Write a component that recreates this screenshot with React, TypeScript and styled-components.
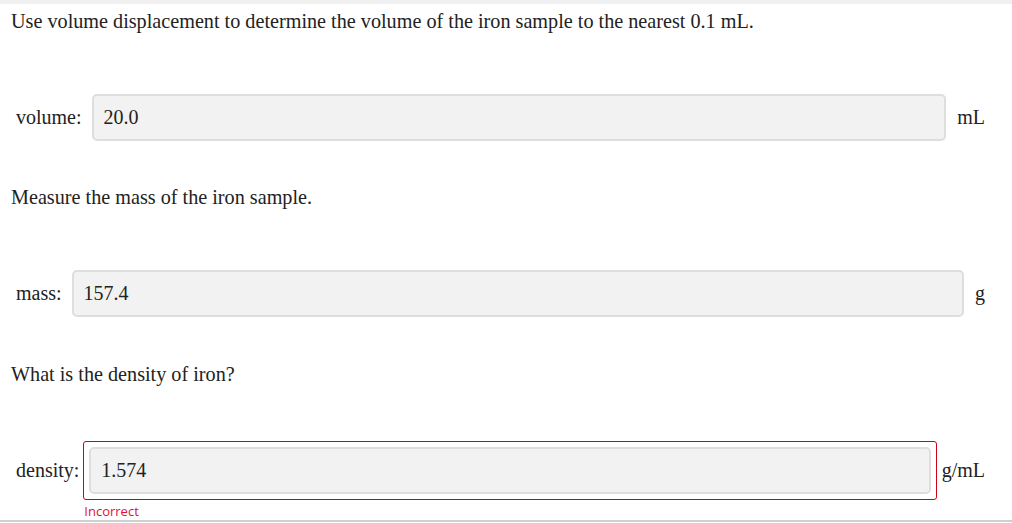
import React from 'react';
import styled, { createGlobalStyle } from 'styled-components';

const GlobalStyle = createGlobalStyle`
    html, body {
        margin: 0;
        padding: 0;
        background: #ffffff;
    }
    body {
        font-family: "Liberation Serif", "Times New Roman", serif;
        color: #222222;
    }
`;

const Page = styled.div`
    width: 1012px;
    border-top: 4px solid #f0f0f0;
    border-bottom: 2px solid #cfcfcf;
    padding-top: 6px;
    box-sizing: border-box;
`;

const Prompt = styled.p`
    margin: 0;
    padding-left: 11px;
    font-size: 20.2px;
    line-height: 23px;
`;

const Row = styled.div<{ $first?: boolean; $last?: boolean }>`
    display: grid;
    grid-template-columns: auto 1fr auto;
    align-items: center;
    margin: 55px 0 ${(p) => (p.$last ? '0' : p.$first ? '39px' : '40px')};
    padding: 0 27px 0 16px;
    font-size: 20px;
    line-height: 23px;
`;

const Label = styled.label`
    margin-right: 4px;
    white-space: nowrap;
`;

const Field = styled.div<{ $wrong?: boolean }>`
    display: flex;
    padding: 5px;
    border: 1px solid ${(p) => (p.$wrong ? '#d0021b' : 'transparent')};
    border-radius: 3px;
`;

const Input = styled.input`
    flex: 1;
    min-width: 0;
    height: 47px;
    box-sizing: border-box;
    padding: 0 10px;
    border: 2px solid #dedede;
    border-radius: 5px;
    background: #f2f2f2;
    font-family: "Liberation Serif", "Times New Roman", serif;
    font-size: 20px;
    color: #222222;
    outline: none;
`;

const Unit = styled.span`
    margin-left: 5px;
    white-space: nowrap;
`;

const Feedback = styled.div`
    grid-column: 2;
    margin-top: 3px;
    padding-left: 1px;
    font-family: "Open Sans", "Liberation Sans", sans-serif;
    font-size: 13px;
    line-height: 17px;
    color: #e0112b;
`;

type Answer = {
    prompt: string;
    label: string;
    value: string;
    unit: string;
    wrong?: boolean;
};

const answers: Answer[] = [
    {
        prompt: 'Use volume displacement to determine the volume of the iron sample to the nearest 0.1 mL.',
        label: 'volume:',
        value: '20.0',
        unit: 'mL',
    },
    {
        prompt: 'Measure the mass of the iron sample.',
        label: 'mass:',
        value: '157.4',
        unit: 'g',
    },
    {
        prompt: 'What is the density of iron?',
        label: 'density:',
        value: '1.574',
        unit: 'g/mL',
        wrong: true,
    },
];

const App: React.FC = () => {
    return (
        <>
            <GlobalStyle />
            <Page>
                {answers.map((a, i) => (
                    <React.Fragment key={a.label}>
                        <Prompt>{a.prompt}</Prompt>
                        <Row $first={i === 0} $last={i === answers.length - 1}>
                            <Label>{a.label}</Label>
                            <Field $wrong={a.wrong}>
                                <Input type="text" defaultValue={a.value} />
                            </Field>
                            <Unit>{a.unit}</Unit>
                            {a.wrong && <Feedback>Incorrect</Feedback>}
                        </Row>
                    </React.Fragment>
                ))}
            </Page>
        </>
    );
};

export default App;
